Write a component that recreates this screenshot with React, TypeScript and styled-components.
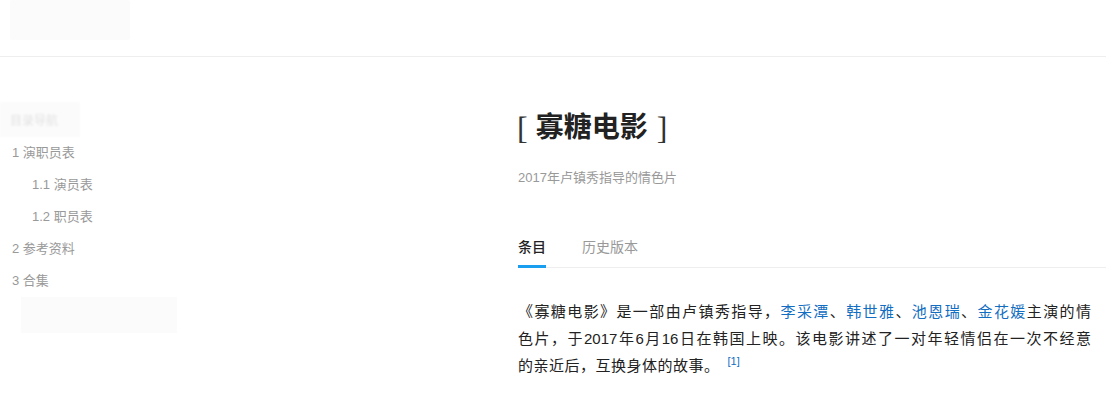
import * as React from "react";
import styled, { createGlobalStyle } from "styled-components";

const GlobalStyle = createGlobalStyle`
  html, body {
    margin: 0;
    padding: 0;
    background: #fff;
  }
  body {
    font-family: "Liberation Sans", "Noto Sans CJK SC", sans-serif;
    color: #333;
  }
`;

const SPage = styled.div`
  width: 1106px;
  min-height: 406px;
`;

const SHeader = styled.header`
  height: 56px;
  border-bottom: 1px solid #eee;
  padding-left: 10px;
`;

const SLogo = styled.div`
  width: 120px;
  height: 40px;
  background: #fbfbfb;
  border-radius: 2px;
`;

const SBody = styled.div`
  display: flex;
`;

const SSide = styled.aside`
  width: 518px;
  flex: none;
  padding-top: 45px;
`;

const STocTitle = styled.div`
  width: 80px;
  height: 35px;
  background: #fbfbfb;
  display: flex;
  align-items: center;
  padding-left: 10px;
  box-sizing: border-box;
  font-size: 12px;
  color: #e2e2e2;
  filter: blur(0.8px);
`;

const STocItem = styled.div<{ $sub?: boolean }>`
  height: 32px;
  line-height: 32px;
  padding-left: ${(p) => (p.$sub ? "32px" : "12px")};
  font-size: 13px;
  color: #999;
  white-space: nowrap;
`;

const STocFoot = styled.div`
  margin-left: 21px;
  width: 156px;
  height: 36px;
  background: #fbfbfb;
`;

const SMain = styled.main`
  flex: 1;
  padding-top: 51px;
`;

const STitle = styled.h1`
  margin: 0;
  display: flex;
  align-items: center;
  font-family: "Liberation Serif", "Noto Sans CJK SC", serif;
  font-size: 28px;
  line-height: 40px;
  font-weight: 700;
  color: #222;
`;

const SBracket = styled.span<{ $right?: boolean }>`
  font-weight: 400;
  font-size: 32px;
  color: #333;
  margin: ${(p) => (p.$right ? "0 0 0 9px" : "0 8px 0 -1px")};
`;

const SSubtitle = styled.div`
  margin-top: 20px;
  font-size: 13px;
  line-height: 20px;
  color: #999;
`;

const STabs = styled.div`
  margin-top: 49px;
  display: flex;
  gap: 36px;
  border-bottom: 1px solid #eee;
`;

const STab = styled.div<{ $active?: boolean }>`
  position: relative;
  font-size: 14px;
  line-height: 20px;
  padding-bottom: 10px;
  font-weight: ${(p) => (p.$active ? 500 : 400)};
  color: ${(p) => (p.$active ? "#222" : "#999")};
  &::after {
    content: "";
    display: ${(p) => (p.$active ? "block" : "none")};
    position: absolute;
    left: 0;
    right: 0;
    bottom: -1px;
    height: 3px;
    background: #1a9ff0;
  }
`;

const SPara = styled.p`
  margin: 30px 0 0;
  width: 573px;
  font-size: 15px;
  line-height: 27px;
  color: #222;
`;

const SLine = styled.span<{ $justify?: boolean }>`
  display: block;
  white-space: nowrap;
  text-align: ${(p) => (p.$justify ? "justify" : "left")};
  text-align-last: ${(p) => (p.$justify ? "justify" : "auto")};
  letter-spacing: ${(p) => (p.$justify ? "0" : "0.5px")};
`;

const SLink = styled.a`
  color: #136ec2;
  text-decoration: none;
`;

const SRef = styled.sup`
  font-size: 11px;
  color: #136ec2;
  margin-left: 8px;
  letter-spacing: 0;
  vertical-align: 6px;
  line-height: 0;
`;

const toc = [
  { text: "1 演职员表" },
  { text: "1.1 演员表", sub: true },
  { text: "1.2 职员表", sub: true },
  { text: "2 参考资料" },
  { text: "3 合集" },
];

export default function App() {
  return (
    <SPage>
      <GlobalStyle />
      <SHeader>
        <SLogo />
      </SHeader>
      <SBody>
        <SSide>
          <STocTitle>目录导航</STocTitle>
          {toc.map((t) => (
            <STocItem key={t.text} $sub={t.sub}>
              {t.text}
            </STocItem>
          ))}
          <STocFoot />
        </SSide>
        <SMain>
          <STitle>
            <SBracket>[</SBracket>寡糖电影<SBracket $right>]</SBracket>
          </STitle>
          <SSubtitle>2017年卢镇秀指导的情色片</SSubtitle>
          <STabs>
            <STab $active>条目</STab>
            <STab>历史版本</STab>
          </STabs>
          <SPara>
            <SLine $justify>
              《寡糖电影》是一部由卢镇秀指导，<SLink>李采潭</SLink>、<SLink>韩世雅</SLink>、
              <SLink>池恩瑞</SLink>、<SLink>金花媛</SLink>主演的情
            </SLine>
            <SLine $justify>色片，于2017年6月16日在韩国上映。该电影讲述了一对年轻情侣在一次不经意</SLine>
            <SLine>
              的亲近后，互换身体的故事。<SRef>[1]</SRef>
            </SLine>
          </SPara>
        </SMain>
      </SBody>
    </SPage>
  );
}
